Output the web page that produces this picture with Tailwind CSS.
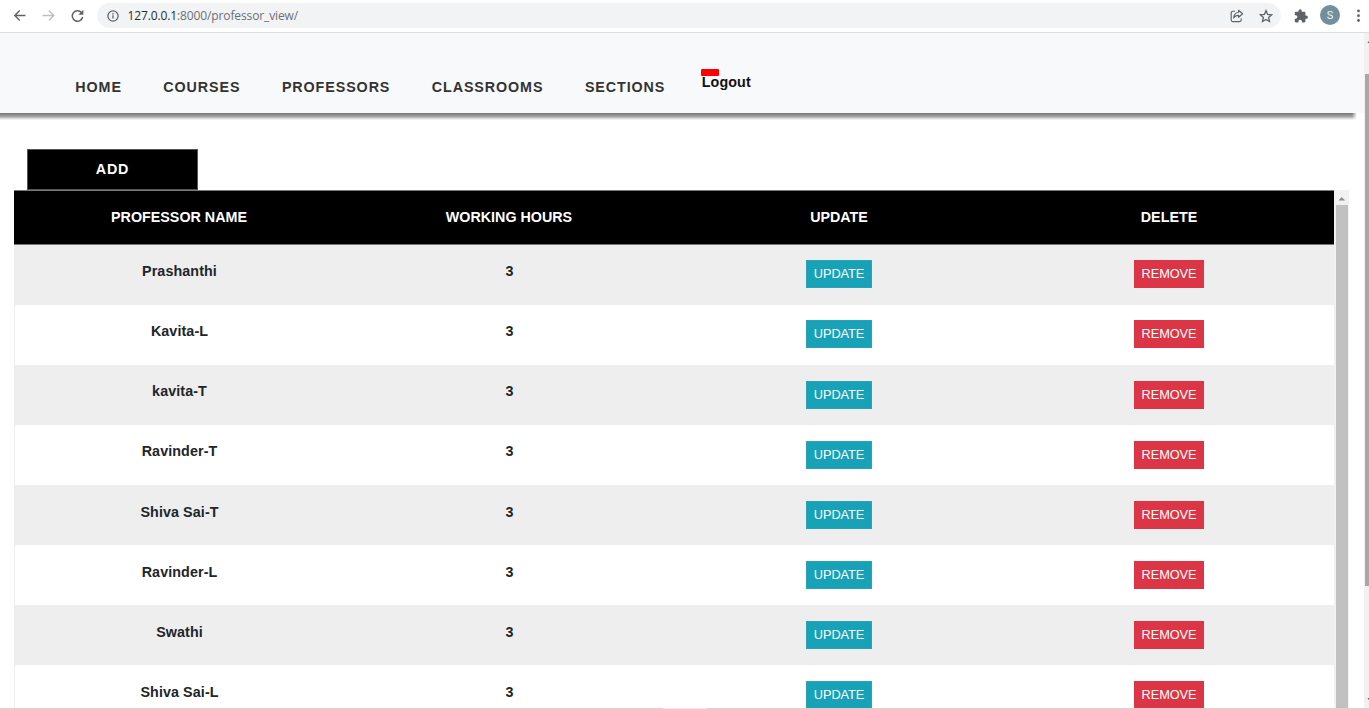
<!DOCTYPE html>
<html lang="en">
<head>
<meta charset="utf-8">
<title>Professors</title>
<script src="https://cdn.jsdelivr.net/npm/@tailwindcss/browser@4"></script>
</head>
<body class="w-[1369px] h-[709px] overflow-hidden bg-white font-['Liberation_Sans',Arial,sans-serif] text-[#212529]">
<div class="relative flex h-[709px] flex-col overflow-hidden">
  <!-- Browser toolbar -->
  <header class="flex h-[33px] shrink-0 items-start border-b border-[#dcdee1] bg-white text-[#5f6368]">
    <svg class="mt-[8px] ml-[12px] size-4 shrink-0" viewBox="0 0 16 16" fill="none" stroke="#5f6368" stroke-width="1.4"><path d="M13.500 7.500H3M7.700 2.600L2.800 7.500l4.900 4.900"/></svg>
    <svg class="mt-[8px] ml-[13px] size-4 shrink-0" viewBox="0 0 16 16" fill="none" stroke="#bdbfc2" stroke-width="1.4"><path d="M1.500 7.500H12M7.900 2.600l4.900 4.900-4.900 4.900"/></svg>
    <svg class="mt-[8px] ml-[12px] size-4 shrink-0" viewBox="0 0 16 16" fill="none" stroke="#5f6368" stroke-width="1.500"><path d="M12.600 4.800A5.200 5.200 0 1 0 13.600 9"/><path d="M14.400 1.800v5h-5z" fill="#5f6368" stroke="none"/></svg>
    <div class="mt-[3px] ml-[12px] flex h-[25px] w-[1184px] shrink-0 items-center rounded-full bg-[#f1f3f4] pr-[8.500px] pl-[10px]">
      <svg class="size-3 shrink-0" viewBox="0 0 12 12" fill="none" stroke="#5f6368" stroke-width="1.300"><circle cx="6" cy="6" r="5.100"/><path d="M6 5.300v3.300M6 3v1.400"/></svg>
      <span class="ml-[8.500px] font-['Open_Sans',sans-serif] text-[12px] leading-4 tracking-[-0.120px] text-[#6c7074]"><span class="text-[#2b2d30]">127.0.0.1</span>:8000/professor_view/</span>
      <svg class="ml-auto size-[14px] shrink-0" viewBox="0 0 14 14" fill="none" stroke="#5f6368" stroke-width="1.150" stroke-linejoin="round"><path d="M5 2.200H2.700a1.500 1.500 0 0 0-1.500 1.500v7.400a1.500 1.500 0 0 0 1.500 1.500h7a1.500 1.500 0 0 0 1.500-1.500V9.400"/><path d="M8.600 1.300l4 3.500-4 3.500V6.400C6.200 6.400 4.700 7.200 3.600 9c.3-2.900 1.900-5.200 5-5.700z"/></svg>
      <svg class="ml-[15px] size-[14px] shrink-0" viewBox="0 0 14 14" fill="none" stroke="#5f6368" stroke-width="1.300"><path d="M7 1.600l1.600 3.800 4.100.4-3.100 2.700.9 4L7 10.400l-3.500 2.100.9-4L1.300 5.800l4.100-.4z"/></svg>
    </div>
    <svg class="mt-[9px] ml-[13px] size-[14px] shrink-0" viewBox="0 0 14 14" fill="#5f6368"><path d="M12.300 6.600h-.9V3.900c0-.7-.5-1.200-1.200-1.200H7.700v-.9a1.600 1.600 0 0 0-3.200 0v.9H2C1.300 2.700.8 3.200.8 3.900v2.400h.8a1.750 1.750 0 0 1 0 3.500H.8v2.400c0 .7.5 1.200 1.200 1.200h2.400v-.8a1.750 1.750 0 0 1 3.500 0v.8h2.300c.7 0 1.200-.5 1.200-1.200V9.800h.9a1.600 1.600 0 0 0 0-3.200z"/></svg>
    <div class="mt-[5px] ml-[12px] flex size-[20px] shrink-0 items-center justify-center rounded-full bg-[#718f9c] pt-px font-[Roboto,sans-serif] text-[11px] leading-none text-[#eef3f5]">S</div>
    <svg class="mt-[9px] ml-[11px] h-[14px] w-[14px] shrink-0" viewBox="0 0 14 14" fill="#5f6368"><circle cx="7.500" cy="1.900" r="1.400"/><circle cx="7.500" cy="6.700" r="1.400"/><circle cx="7.500" cy="11.500" r="1.400"/></svg>
  </header>

  <div class="flex min-h-0 flex-1">
    <main class="flex w-[1364px] shrink-0 flex-col">
      <!-- Site navigation -->
      <div class="h-[80px] shrink-0 bg-[#f8f9fb]">
        <nav class="flex items-start gap-[41.500px] pt-[45px] pl-[75.300px] text-[14.300px] leading-[18px] font-bold tracking-[0.910px] whitespace-nowrap text-[#333]">
          <a>HOME</a><a>COURSES</a><a>PROFESSORS</a><a>CLASSROOMS</a><a>SECTIONS</a>
          <a class="relative -mt-[5px] -ml-[5px] tracking-[0.100px] text-[#111]"><i class="absolute -top-[4px] -left-px h-[7px] w-[18px] rounded-[1px] bg-[#f00]"></i><span class="relative">Logout</span></a>
        </nav>
      </div>
      <div class="flex h-[7px] shrink-0">
        <div class="w-[1352px] bg-linear-to-b from-[#7c7c7c] from-10% via-[#a4a4a4] to-white"></div>
        <div class="w-[5px] bg-linear-to-b from-[#7c7c7c] from-10% via-[#a4a4a4] to-white mask-r-from-0% mask-r-to-100%"></div>
      </div>

      <a class="mt-[29px] ml-[27px] flex h-[41px] w-[171px] shrink-0 items-center justify-center border border-[#555] bg-black text-[14.300px] font-bold tracking-[0.900px] text-white">ADD</a>

      <!-- Scrolling table -->
      <div class="ml-[14px] flex min-h-0 w-[1335px] flex-1">
        <div class="w-[1320px] shrink-0">
          <div class="grid h-[54.500px] grid-cols-4 items-center border-y border-[#777] bg-black text-center text-[14.300px] font-bold text-white"><span>PROFESSOR NAME</span><span>WORKING HOURS</span><span>UPDATE</span><span>DELETE</span></div>
          <div id="rows"></div>
        </div>
        <div class="flex w-[15px] flex-col bg-[#f1f1f1] px-[1.500px]">
          <svg class="h-[15px] w-full shrink-0" viewBox="0 0 12 15" fill="#8b8b8b"><path d="M2.500 10.500L5.700 7 9 10.500z"/></svg>
          <div class="flex-1 bg-[#c1c1c1]"></div>
        </div>
      </div>
    </main>
    <!-- Page scrollbar -->
    <div class="flex w-[5px] shrink-0 flex-col bg-[#f1f1f1]">
      <svg class="h-[41px] w-full shrink-0" viewBox="0 0 5 41" fill="#555"><path d="M3.500 10L5 8v2z"/></svg>
      <div class="ml-px h-[512px] bg-[#a8a8a8]"></div>
      <svg class="mt-auto mb-[7px] h-[4px] w-full" viewBox="0 0 5 4" fill="#555"><path d="M3.500 0H5v2z"/></svg>
    </div>
  </div>
  <div class="absolute bottom-0 left-0 flex h-px w-full bg-[#d6d2d2]"><div class="ml-[663px] w-[44px] bg-[#f3eaea]"></div></div>
</div>
<script>
const names = ['Prashanthi', 'Kavita-L', 'kavita-T', 'Ravinder-T', 'Shiva Sai-T', 'Ravinder-L', 'Swathi', 'Shiva Sai-L'];
document.getElementById('rows').innerHTML = names.map(n => `
  <div class="grid h-[60.100px] grid-cols-4 text-center odd:bg-[#eee] even:bg-white even:shadow-[inset_1px_0_#eee] text-[14.300px] leading-[18px] font-bold tracking-[0.100px]">
    <span class="pt-[17.700px] pl-px">${n}</span><span class="pt-[17.700px] pl-px">3</span>
    <span class="flex items-start justify-center pt-[15.900px]"><button class="h-[28px] w-[66px] border border-[#2ba3b7] bg-[#17a2b8] text-[12.800px] font-normal tracking-[-0.100px] text-white">UPDATE</button></span>
    <span class="flex items-start justify-center pt-[15.900px]"><button class="h-[28px] w-[70px] border border-[#dc3545] bg-[#dc3545] text-[12.800px] font-normal tracking-[-0.100px] text-white">REMOVE</button></span>
  </div>`).join('');
</script>
</body>
</html>
